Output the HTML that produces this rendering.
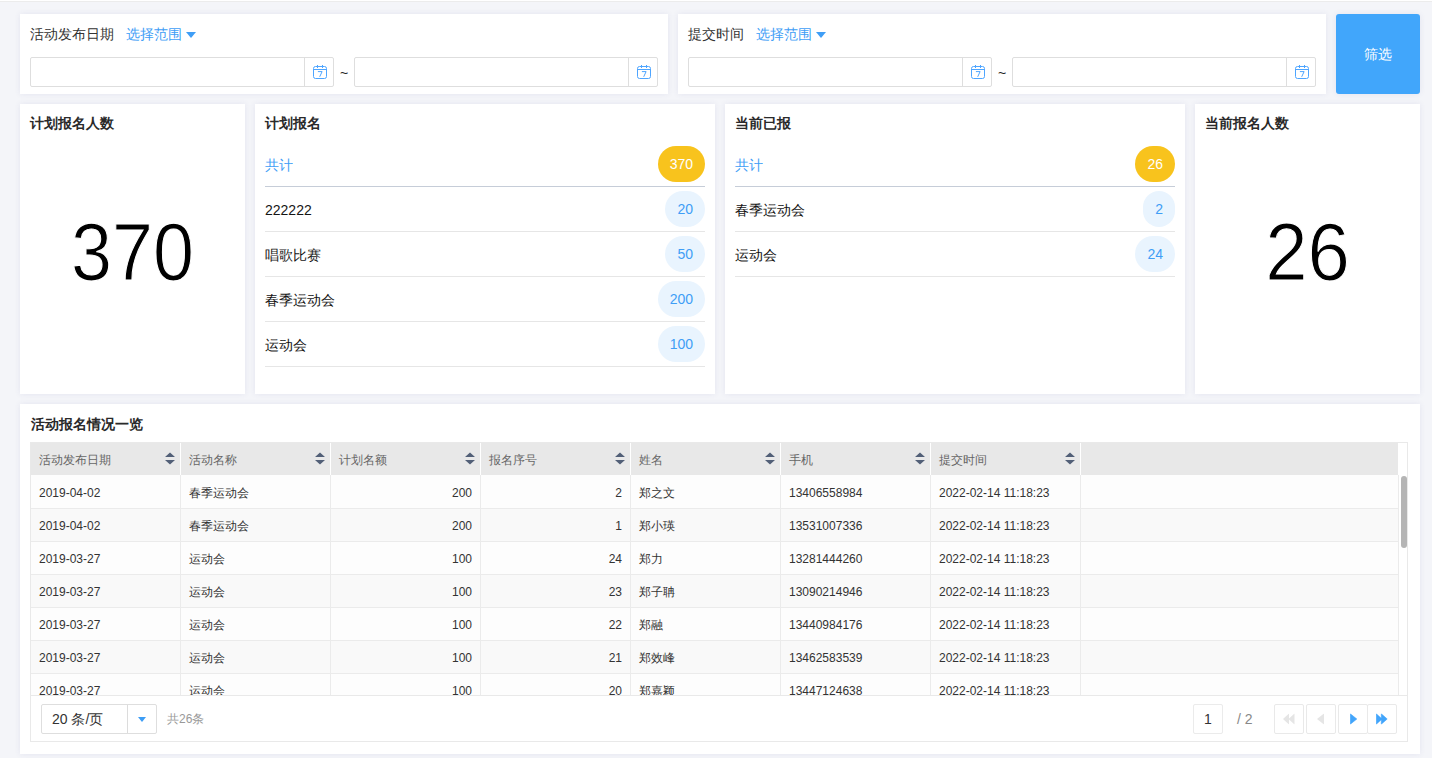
<!DOCTYPE html>
<html><head><meta charset="utf-8">
<style>
*{box-sizing:border-box;margin:0;padding:0}
html,body{width:1432px;height:758px;overflow:hidden}
body{background:#f4f5f9;font-family:"Liberation Sans",sans-serif;color:#333;position:relative;font-size:14px}
.topline{position:absolute;left:0;top:0;width:1432px;height:1px;background:#fff}
.topline2{position:absolute;left:0;top:1px;width:1432px;height:1px;background:#ececec}
.card{position:absolute;background:#fff;box-shadow:0 0 6px rgba(70,70,140,0.09)}
.abs{position:absolute;white-space:nowrap}
.lbl{font-size:14px;color:#333;line-height:16px}
.link{font-size:14px;color:#3f9ef6;line-height:16px}
.tri{position:absolute;width:0;height:0;border-left:5px solid transparent;border-right:5px solid transparent;border-top:6px solid #3f9ef6}
.inp{position:absolute;height:30px;width:304px;border:1px solid #dedede;border-radius:2px;background:#fff}
.inp .btn{position:absolute;right:0;top:0;width:29px;height:28px;border-left:1px solid #dedede}
.inp svg{position:absolute;left:8px;top:7px}
.tilde{position:absolute;font-size:14px;color:#222;line-height:14px}
.filter{position:absolute;left:1336px;top:14px;width:84px;height:80px;background:#41a6fb;box-shadow:0 0 6px rgba(70,70,140,0.09);border-radius:3px;color:#fff;font-size:14px;line-height:80px;text-align:center}
.ttl{position:absolute;font-size:14px;font-weight:bold;color:#2a2a2a;line-height:16px;white-space:nowrap}
.big{position:absolute;font-size:81px;line-height:80px;color:#000;text-align:center;white-space:nowrap;-webkit-text-stroke:1.1px #fff}
.row{position:absolute;height:45px;border-bottom:1px solid #e6e6e6}
.row.tot{border-bottom:1px solid #c6cdd8}
.row .t{position:absolute;left:0;top:14.5px;font-size:14px;line-height:16px;color:#151515;white-space:nowrap}
.row.tot .t{color:#3f9ef6}
.badge{position:absolute;right:0;top:4px;height:36px;border-radius:18px;padding:0 12px;line-height:36px;font-size:14px;background:#e9f4fe;color:#3f9ef6}
.row.tot .badge{background:#f8c31d;color:#fff;top:0}
.tb{position:absolute;border:1px solid #e9e9e9;background:#fff}
.thbg{position:absolute;background:#e8e8e8}
.th{position:absolute;font-size:12px;line-height:32px;color:#666;white-space:nowrap}
.sort{position:absolute;width:10px;height:13px}.sort svg{display:block}
.sort i{position:absolute;left:0;width:0;height:0;border-left:5px solid transparent;border-right:5px solid transparent}
.sort .u{top:0;border-bottom:5px solid #5b6b80}
.sort .d{top:7px;border-top:5px solid #5b6b80}
.hsep{position:absolute;width:1px;height:32px;background:#fff}
.body{position:absolute;overflow:hidden}
.tr{position:absolute;left:0;width:1367px;height:33px;border-bottom:1px solid #ebebeb}
.td{position:absolute;top:1px;width:150px;padding:0 8px 0 9px;font-size:12px;line-height:32px;color:#333;white-space:nowrap}
.td.r{text-align:right}
.vsep{position:absolute;top:0;width:1px;height:220px;background:#ebebeb}
.sb{position:absolute;width:6px;height:72px;border-radius:3px;background:#b5b5b5}
.pager{position:absolute;border:1px solid #e9e9e9;background:#fff}
.sel{position:absolute;width:116px;height:30px;border:1px solid #dedede;border-radius:2px;background:#fff}
.sel .st{position:absolute;left:10px;top:6px;font-size:14px;line-height:16px;color:#333;white-space:nowrap}
.sel .sbtn{position:absolute;left:85px;top:0;width:29px;height:28px;border-left:1px solid #dcdcdc}
.sel .sbtn i{position:absolute;left:10px;top:12px;width:0;height:0;border-left:4.5px solid transparent;border-right:4.5px solid transparent;border-top:5px solid #3d9df5}
.total{font-size:12px;color:#999;line-height:14px}
.pbox{position:absolute;width:30px;height:30px;border:1px solid #ebebeb;border-radius:2px;text-align:center;line-height:28px;font-size:14px;color:#333}
.ptot{font-size:14px;color:#888;line-height:16px}
.pbtn{position:absolute;width:30px;height:30px;border:1px solid #e9e9e9;border-radius:2px;background:#fff}
.pbtn svg{position:absolute;left:50%;top:50%;transform:translate(-50%,-50%)}
</style></head><body>
<div class="topline"></div><div class="topline2"></div>

<!-- filter card 1 -->
<div class="card" style="left:20px;top:14px;width:648px;height:80px"></div>
<div class="abs lbl" style="left:30px;top:26px">活动发布日期</div>
<div class="abs link" style="left:126px;top:26px">选择范围</div>
<div class="tri" style="left:186px;top:32px"></div>
<div class="inp" style="left:30px;top:57px"><div class="btn"><svg width="14" height="14" viewBox="0 0 14 14"><rect x="0.5" y="1.5" width="13" height="12" rx="2" fill="none" stroke="#4ea5ff" stroke-width="1"/><path d="M0.5 4.5h13M4.5 0v3M9.5 0v3M4.9 6.6h4.2L6.7 11.8" fill="none" stroke="#4ea5ff" stroke-width="1"/></svg></div></div>
<div class="tilde" style="left:340px;top:66px">~</div>
<div class="inp" style="left:354px;top:57px"><div class="btn"><svg width="14" height="14" viewBox="0 0 14 14"><rect x="0.5" y="1.5" width="13" height="12" rx="2" fill="none" stroke="#4ea5ff" stroke-width="1"/><path d="M0.5 4.5h13M4.5 0v3M9.5 0v3M4.9 6.6h4.2L6.7 11.8" fill="none" stroke="#4ea5ff" stroke-width="1"/></svg></div></div>

<!-- filter card 2 -->
<div class="card" style="left:678px;top:14px;width:648px;height:80px"></div>
<div class="abs lbl" style="left:688px;top:26px">提交时间</div>
<div class="abs link" style="left:756px;top:26px">选择范围</div>
<div class="tri" style="left:816px;top:32px"></div>
<div class="inp" style="left:688px;top:57px"><div class="btn"><svg width="14" height="14" viewBox="0 0 14 14"><rect x="0.5" y="1.5" width="13" height="12" rx="2" fill="none" stroke="#4ea5ff" stroke-width="1"/><path d="M0.5 4.5h13M4.5 0v3M9.5 0v3M4.9 6.6h4.2L6.7 11.8" fill="none" stroke="#4ea5ff" stroke-width="1"/></svg></div></div>
<div class="tilde" style="left:998px;top:66px">~</div>
<div class="inp" style="left:1012px;top:57px"><div class="btn"><svg width="14" height="14" viewBox="0 0 14 14"><rect x="0.5" y="1.5" width="13" height="12" rx="2" fill="none" stroke="#4ea5ff" stroke-width="1"/><path d="M0.5 4.5h13M4.5 0v3M9.5 0v3M4.9 6.6h4.2L6.7 11.8" fill="none" stroke="#4ea5ff" stroke-width="1"/></svg></div></div>

<div class="filter">筛选</div>

<!-- stat cards -->
<div class="card" style="left:20px;top:104px;width:225px;height:290px"></div>
<div class="ttl" style="left:30px;top:115px">计划报名人数</div>
<div class="big" style="left:20px;top:212px;width:225px;transform:scaleX(0.91)">370</div>

<div class="card" style="left:255px;top:104px;width:460px;height:290px"></div>
<div class="ttl" style="left:265px;top:115px">计划报名</div>
<div class="row tot" style="left:265px;top:146px;width:440px;height:41px"><div class="t" style="top:11px">共计</div><div class="badge">370</div></div>
<div class="row" style="left:265px;top:187px;width:440px"><div class="t">222222</div><div class="badge">20</div></div>
<div class="row" style="left:265px;top:232px;width:440px"><div class="t">唱歌比赛</div><div class="badge">50</div></div>
<div class="row" style="left:265px;top:277px;width:440px"><div class="t">春季运动会</div><div class="badge">200</div></div>
<div class="row" style="left:265px;top:322px;width:440px"><div class="t">运动会</div><div class="badge">100</div></div>

<div class="card" style="left:725px;top:104px;width:460px;height:290px"></div>
<div class="ttl" style="left:735px;top:115px">当前已报</div>
<div class="row tot" style="left:735px;top:146px;width:440px;height:41px"><div class="t" style="top:11px">共计</div><div class="badge">26</div></div>
<div class="row" style="left:735px;top:187px;width:440px"><div class="t">春季运动会</div><div class="badge">2</div></div>
<div class="row" style="left:735px;top:232px;width:440px"><div class="t">运动会</div><div class="badge">24</div></div>

<div class="card" style="left:1195px;top:104px;width:225px;height:290px"></div>
<div class="ttl" style="left:1205px;top:115px">当前报名人数</div>
<div class="big" style="left:1195px;top:212px;width:225px;transform:scaleX(0.94)">26</div>

<!-- table card -->
<div class="card" style="left:20px;top:404px;width:1400px;height:350px"></div>
<div class="ttl" style="left:31px;top:416px">活动报名情况一览</div>
<div id="tbl">
<div class="tb" style="left:30px;top:442px;width:1378px;height:300px"></div>
<div class="thbg" style="left:31px;top:443px;width:1367px;height:32px"></div>
<div class="th" style="left:39px;top:444px">活动发布日期</div>
<div class="sort" style="left:165px;top:452px"><svg width="10" height="13" viewBox="0 0 10 13"><path d="M5 0.5L10 5H0zM0 8h10L5 12.5z" fill="#525f77"/></svg></div>
<div class="hsep" style="left:180px;top:443px"></div>
<div class="th" style="left:189px;top:444px">活动名称</div>
<div class="sort" style="left:315px;top:452px"><svg width="10" height="13" viewBox="0 0 10 13"><path d="M5 0.5L10 5H0zM0 8h10L5 12.5z" fill="#525f77"/></svg></div>
<div class="hsep" style="left:330px;top:443px"></div>
<div class="th" style="left:339px;top:444px">计划名额</div>
<div class="sort" style="left:465px;top:452px"><svg width="10" height="13" viewBox="0 0 10 13"><path d="M5 0.5L10 5H0zM0 8h10L5 12.5z" fill="#525f77"/></svg></div>
<div class="hsep" style="left:480px;top:443px"></div>
<div class="th" style="left:489px;top:444px">报名序号</div>
<div class="sort" style="left:615px;top:452px"><svg width="10" height="13" viewBox="0 0 10 13"><path d="M5 0.5L10 5H0zM0 8h10L5 12.5z" fill="#525f77"/></svg></div>
<div class="hsep" style="left:630px;top:443px"></div>
<div class="th" style="left:639px;top:444px">姓名</div>
<div class="sort" style="left:765px;top:452px"><svg width="10" height="13" viewBox="0 0 10 13"><path d="M5 0.5L10 5H0zM0 8h10L5 12.5z" fill="#525f77"/></svg></div>
<div class="hsep" style="left:780px;top:443px"></div>
<div class="th" style="left:789px;top:444px">手机</div>
<div class="sort" style="left:915px;top:452px"><svg width="10" height="13" viewBox="0 0 10 13"><path d="M5 0.5L10 5H0zM0 8h10L5 12.5z" fill="#525f77"/></svg></div>
<div class="hsep" style="left:930px;top:443px"></div>
<div class="th" style="left:939px;top:444px">提交时间</div>
<div class="sort" style="left:1065px;top:452px"><svg width="10" height="13" viewBox="0 0 10 13"><path d="M5 0.5L10 5H0zM0 8h10L5 12.5z" fill="#525f77"/></svg></div>
<div class="hsep" style="left:1080px;top:443px"></div>
<div class="body" style="left:31px;top:475px;width:1368px;height:220px;background:#fdfdfd">
<div class="tr" style="top:1px;background:#fdfdfd">
<div class="td" style="left:-1px">2019-04-02</div>
<div class="td" style="left:149px">春季运动会</div>
<div class="td r" style="left:299px">200</div>
<div class="td r" style="left:449px">2</div>
<div class="td" style="left:599px">郑之文</div>
<div class="td" style="left:749px">13406558984</div>
<div class="td" style="left:899px">2022-02-14 11:18:23</div>
</div>
<div class="tr" style="top:34px;background:#f9f9f9">
<div class="td" style="left:-1px">2019-04-02</div>
<div class="td" style="left:149px">春季运动会</div>
<div class="td r" style="left:299px">200</div>
<div class="td r" style="left:449px">1</div>
<div class="td" style="left:599px">郑小瑛</div>
<div class="td" style="left:749px">13531007336</div>
<div class="td" style="left:899px">2022-02-14 11:18:23</div>
</div>
<div class="tr" style="top:67px;background:#fdfdfd">
<div class="td" style="left:-1px">2019-03-27</div>
<div class="td" style="left:149px">运动会</div>
<div class="td r" style="left:299px">100</div>
<div class="td r" style="left:449px">24</div>
<div class="td" style="left:599px">郑力</div>
<div class="td" style="left:749px">13281444260</div>
<div class="td" style="left:899px">2022-02-14 11:18:23</div>
</div>
<div class="tr" style="top:100px;background:#f9f9f9">
<div class="td" style="left:-1px">2019-03-27</div>
<div class="td" style="left:149px">运动会</div>
<div class="td r" style="left:299px">100</div>
<div class="td r" style="left:449px">23</div>
<div class="td" style="left:599px">郑子聃</div>
<div class="td" style="left:749px">13090214946</div>
<div class="td" style="left:899px">2022-02-14 11:18:23</div>
</div>
<div class="tr" style="top:133px;background:#fdfdfd">
<div class="td" style="left:-1px">2019-03-27</div>
<div class="td" style="left:149px">运动会</div>
<div class="td r" style="left:299px">100</div>
<div class="td r" style="left:449px">22</div>
<div class="td" style="left:599px">郑融</div>
<div class="td" style="left:749px">13440984176</div>
<div class="td" style="left:899px">2022-02-14 11:18:23</div>
</div>
<div class="tr" style="top:166px;background:#f9f9f9">
<div class="td" style="left:-1px">2019-03-27</div>
<div class="td" style="left:149px">运动会</div>
<div class="td r" style="left:299px">100</div>
<div class="td r" style="left:449px">21</div>
<div class="td" style="left:599px">郑效峰</div>
<div class="td" style="left:749px">13462583539</div>
<div class="td" style="left:899px">2022-02-14 11:18:23</div>
</div>
<div class="tr" style="top:199px;background:#fdfdfd">
<div class="td" style="left:-1px">2019-03-27</div>
<div class="td" style="left:149px">运动会</div>
<div class="td r" style="left:299px">100</div>
<div class="td r" style="left:449px">20</div>
<div class="td" style="left:599px">郑嘉颖</div>
<div class="td" style="left:749px">13447124638</div>
<div class="td" style="left:899px">2022-02-14 11:18:23</div>
</div>
<div class="vsep" style="left:149px"></div>
<div class="vsep" style="left:299px"></div>
<div class="vsep" style="left:449px"></div>
<div class="vsep" style="left:599px"></div>
<div class="vsep" style="left:749px"></div>
<div class="vsep" style="left:899px"></div>
<div class="vsep" style="left:1049px"></div>
<div class="vsep" style="left:1367px"></div>
</div>
<div class="sb" style="left:1401px;top:476px"></div>
<div class="pager" style="left:30px;top:695px;width:1378px;height:47px"></div>
<div class="sel" style="left:41px;top:704px"><span class="st">20 条/页</span><div class="sbtn"><i></i></div></div>
<div class="abs total" style="left:167px;top:712px">共26条</div>
<div class="pbox" style="left:1193px;top:704px">1</div>
<div class="abs ptot" style="left:1237px;top:711px">/ 2</div>
<div class="pbtn" style="left:1274px;top:704px"><svg width="12" height="11" viewBox="0 0 12 11"><path d="M6 0L0 5.5 6 11zM11.5 0L5.5 5.5 11.5 11z" fill="#e5e5e5"/></svg></div>
<div class="pbtn" style="left:1306px;top:704px"><svg width="8" height="11" viewBox="0 0 8 11"><path d="M7 0L0 5.5 7 11z" fill="#e5e5e5"/></svg></div>
<div class="pbtn" style="left:1338px;top:704px"><svg width="8" height="11" viewBox="0 0 8 11" style="margin-left:1px"><path d="M0.3 0.3L6.8 5.5 0.3 10.7z" fill="#42a5fb" stroke="#42a5fb" stroke-width="0.6" stroke-linejoin="round"/></svg></div>
<div class="pbtn" style="left:1367px;top:704px"><svg width="12" height="11" viewBox="0 0 12 11"><path d="M0.3 0.3L6 5.5 0.3 10.7zM5.3 0.3L11.2 5.5 5.3 10.7z" fill="#42a5fb" stroke="#42a5fb" stroke-width="0.6" stroke-linejoin="round"/></svg></div>
</div>
</body></html>
